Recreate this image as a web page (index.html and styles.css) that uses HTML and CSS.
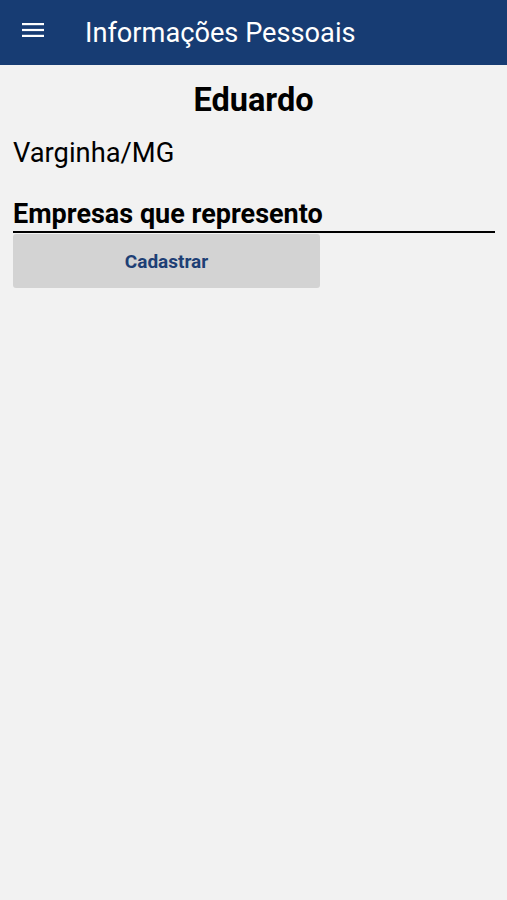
FILE: index.html
```html
<!DOCTYPE html>
<html lang="pt-BR">
<head>
<meta charset="utf-8">
<title>Informações Pessoais</title>
<link rel="stylesheet" href="styles.css">
</head>
<body>
<header class="appbar">
  <button class="menu-btn" aria-label="Menu">
    <svg width="22" height="14" viewBox="0 0 22 14"><rect x="0" y="0" width="22" height="2.2" fill="#fff"/><rect x="0" y="5.9" width="22" height="2.2" fill="#fff"/><rect x="0" y="11.8" width="22" height="2.2" fill="#fff"/></svg>
  </button>
  <h1 class="appbar-title">Informações Pessoais</h1>
</header>
<main class="content">
  <h2 class="name">Eduardo</h2>
  <p class="city">Varginha/MG</p>
  <section class="companies">
    <h3 class="section-title">Empresas que represento</h3>
    <div class="actions">
      <button class="btn">Cadastrar</button>
    </div>
  </section>
</main>
</body>
</html>
```
FILE: styles.css
```css
* { box-sizing: border-box; }
html, body { margin: 0; padding: 0; }
body {
  background: #f2f2f2;
  font-family: Roboto, "Noto Sans", sans-serif;
  color: #000;
  min-height: 900px;
}
.appbar {
  height: 65px;
  background: #173c73;
  display: flex;
  align-items: center;
  padding: 0 0 0 22px;
}
.menu-btn {
  background: none;
  border: 0;
  padding: 0;
  width: 22px;
  height: 14px;
  display: flex;
  margin-top: -5px;
}
.appbar-title {
  margin: 0 0 0 41px;
  color: #fff;
  font-size: 27.2px;
  font-weight: 400;
}
.content {
  padding: 0 13px;
}
.name {
  margin: 17px 0 0;
  text-align: center;
  font-size: 32.5px;
  font-weight: 700;
  line-height: 36px;
}
.city {
  margin: 19px 0 0;
  font-size: 27.3px;
  line-height: 32px;
}
.companies { margin-top: 30px; }
.section-title {
  margin: 0;
  font-size: 27px;
  font-weight: 700;
  line-height: 30px;
  padding-bottom: 2px;
  border-bottom: 2px solid #000;
  margin-right: -1px;
}
.actions { display: flex; margin-top: 1px; }
.btn {
  width: 307px;
  height: 54px;
  background: #d3d3d3;
  border: 0;
  border-radius: 3px;
  color: #1e3f75;
  font-family: Roboto, sans-serif;
  font-size: 19px;
  font-weight: 700;
}
```
